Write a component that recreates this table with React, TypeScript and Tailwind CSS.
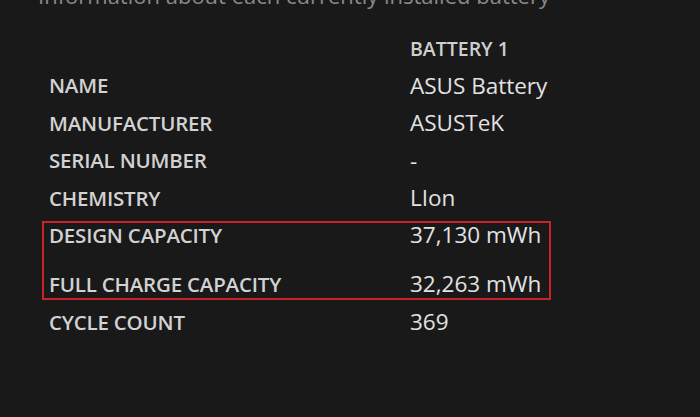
const rows: [string, string][] = [
  ["NAME", "ASUS Battery"],
  ["MANUFACTURER", "ASUSTeK"],
  ["SERIAL NUMBER", "-"],
  ["CHEMISTRY", "LIon"],
];

function Row({ label, value, h }: { label: string; value: string; h: string }) {
  return (
    <div className={`flex items-center ${h}`}>
      <div className="w-[361px] shrink-0 text-[20.5px] font-semibold text-[#d2d2d2] tracking-[-0.2px]">
        {label}
      </div>
      <div className="text-[22.5px] text-[#e2e2e2]">{value}</div>
    </div>
  );
}

function App() {
  return (
    <main
      className="w-[700px] h-[417px] overflow-hidden bg-[#191919]"
      style={{ fontFamily: '"Open Sans", "Noto Sans", sans-serif' }}
    >
      <div className="pl-[38px] h-[30px] flex flex-col overflow-hidden">
        <p className="mt-[-17px] text-[22px] leading-[24px] text-[#8a8a8a] whitespace-nowrap">
          Information about each currently installed battery
        </p>
      </div>
      <div className="pl-[42px]">
        <div className="pl-[7px]">
          <div className="flex items-center h-[37px]">
            <div className="w-[361px] shrink-0" />
            <div className="text-[19.5px] font-semibold text-[#cfcfcf]">BATTERY 1</div>
          </div>
          {rows.map(([l, v]) => (
            <Row key={l} label={l} value={v} h="h-[37.5px]" />
          ))}
        </div>
        <div className="mt-[4px] w-[509px] border-2 border-[#c8232b] pl-[5px] flex flex-col gap-[25px] pb-[2px]">
          <Row label="DESIGN CAPACITY" value="37,130 mWh" h="h-[24px]" />
          <Row label="FULL CHARGE CAPACITY" value="32,263 mWh" h="h-[24px]" />
        </div>
        <div className="pl-[7px] mt-[3px]">
          <Row label="CYCLE COUNT" value="369" h="h-[38px]" />
        </div>
      </div>
    </main>
  );
}

export default App;
